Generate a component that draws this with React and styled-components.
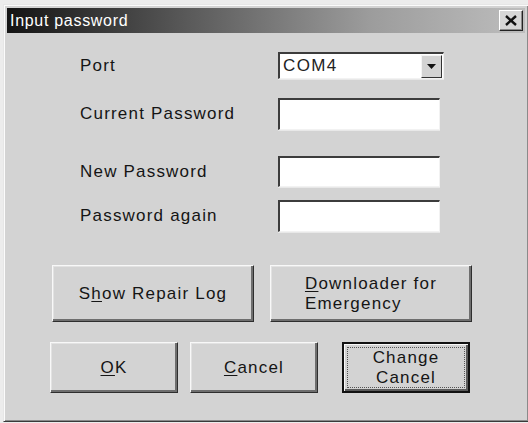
import React from "react";
import styled, { createGlobalStyle } from "styled-components";

const GlobalStyle = createGlobalStyle`
  html, body {
    margin: 0;
    padding: 0;
    background: #ececec;
    overflow: hidden;
  }
  body {
    font-family: "Liberation Sans", Arial, sans-serif;
  }
`;

const Window = styled.div`
  margin: 4px 0 0 3px;
  width: 526px;
  height: 418px;
  box-sizing: border-box;
  background: #d3d3d3;
  border: 1px solid;
  border-color: #e6e6e6 #3a3a3a #3a3a3a #e6e6e6;
  padding: 3px;
  box-shadow: inset 1px 1px 0 #fbfbfb, inset -1px -1px 0 #8a8a8a;
  display: flex;
  flex-direction: column;
`;

const TitleBar = styled.div`
  height: 25px;
  display: flex;
  align-items: center;
  justify-content: space-between;
  padding: 0 0 0 3px;
  background: linear-gradient(to right, #141414 0%, #5a5a5a 35%, #9c9c9c 70%, #bdbdbd 100%);
`;

const Title = styled.span`
  color: #fff;
  font-size: 16px;
  letter-spacing: 0.7px;
`;

const CloseButton = styled.div`
  width: 24px;
  height: 21px;
  box-sizing: border-box;
  margin-right: 2px;
  background: #d6d6d6;
  border: 1px solid;
  border-color: #fff #222 #222 #fff;
  box-shadow: inset -1px -1px 0 #8a8a8a;
  display: flex;
  align-items: center;
  justify-content: center;
`;

const Body = styled.div`
  flex: 1;
  display: flex;
  flex-direction: column;
`;

const Form = styled.div`
  display: grid;
  grid-template-columns: 198px auto;
  padding: 19px 0 0 73px;
  align-items: center;
`;

const Label = styled.div`
  font-size: 17px;
  letter-spacing: 1.2px;
  color: #151515;
  margin-top: ${(p) => p.$top || 0}px;
  height: ${(p) => p.$h}px;
  display: flex;
  align-items: center;
`;

const Field = styled.div`
  margin-top: ${(p) => p.$top || 0}px;
  width: ${(p) => p.$w || 162}px;
  height: ${(p) => p.$h}px;
  box-sizing: border-box;
  background: #fff;
  border-style: solid;
  border-width: 2px 1px 1px 2px;
  border-color: #3c3c3c #f2f2f2 #f2f2f2 #3c3c3c;
  box-shadow: 0 1px 0 #e8e8e8;
  display: flex;
  align-items: center;
`;

const SelectText = styled.span`
  flex: 1;
  padding-left: 3px;
  font-size: 17px;
  letter-spacing: 1.4px;
  color: #222;
`;

const ArrowButton = styled.div`
  width: 21px;
  height: 23px;
  box-sizing: border-box;
  margin-right: 1px;
  background: #d3d3d3;
  border: 1px solid;
  border-color: #f4f4f4 #333 #333 #f4f4f4;
  display: flex;
  align-items: center;
  justify-content: center;
`;

const ButtonRow = styled.div`
  display: flex;
  margin-top: ${(p) => p.$top}px;
  padding-left: ${(p) => p.$left}px;
`;

const Button = styled.div`
  width: ${(p) => p.$w}px;
  height: ${(p) => p.$h}px;
  margin-left: ${(p) => p.$ml || 0}px;
  box-sizing: border-box;
  background: #d3d3d3;
  border: 1px solid;
  border-color: #f8f8f8 #2e2e2e #2e2e2e #f8f8f8;
  box-shadow: inset -2px -2px 0 #6e6e6e, inset 1px 1px 0 #e2e2e2;
  display: flex;
  align-items: center;
  justify-content: center;
  font-size: 17px;
  letter-spacing: 1.2px;
  color: #151515;
  line-height: 20px;
  text-align: ${(p) => p.$align || "center"};
  ${(p) =>
    p.$default &&
    `
    border: 2px solid #111;
    box-shadow: inset 1px 1px 0 #f8f8f8, inset -2px -2px 0 #5a5a5a;
  `}
`;

const FocusRing = styled.div`
  width: calc(100% - 6px);
  height: calc(100% - 6px);
  box-sizing: border-box;
  border: 1px dotted #555;
  display: flex;
  align-items: center;
  justify-content: center;
`;

const Key = styled.span`
  text-decoration: underline;
  text-underline-offset: 2px;
`;

const fields = [
  { label: "Port", top: 0, h: 27, select: true },
  { label: "Current Password", top: 19, h: 32 },
  { label: "New Password", top: 26, h: 31 },
  { label: "Password again", top: 13, h: 32 },
];

export default function App() {
  return (
    <>
      <GlobalStyle />
      <Window>
        <TitleBar>
          <Title>Input password</Title>
          <CloseButton>
            <svg width="12" height="11" viewBox="0 0 12 11">
              <path d="M1 1 L11 10 M11 1 L1 10" stroke="#111" strokeWidth="2.4" />
            </svg>
          </CloseButton>
        </TitleBar>
        <Body>
          <Form>
            {fields.map((f) => (
              <React.Fragment key={f.label}>
                <Label $top={f.top} $h={f.h}>
                  {f.label}
                </Label>
                {f.select ? (
                  <Field $top={f.top} $h={f.h} $w={166}>
                    <SelectText>COM4</SelectText>
                    <ArrowButton>
                      <svg width="9" height="5" viewBox="0 0 9 5">
                        <path d="M0 0 L9 0 L4.5 5 Z" fill="#111" />
                      </svg>
                    </ArrowButton>
                  </Field>
                ) : (
                  <Field $top={f.top} $h={f.h} />
                )}
              </React.Fragment>
            ))}
          </Form>
          <ButtonRow $top={33} $left={45}>
            <Button $w={202} $h={57}>
              <span>
                S<Key>h</Key>ow Repair Log
              </span>
            </Button>
            <Button $w={202} $h={57} $ml={16} $align="left">
              <span>
                <Key>D</Key>ownloader for
                <br />
                Emergency
              </span>
            </Button>
          </ButtonRow>
          <ButtonRow $top={20} $left={43}>
            <Button $w={128} $h={51}>
              <span>
                <Key>O</Key>K
              </span>
            </Button>
            <Button $w={128} $h={51} $ml={12}>
              <span>
                <Key>C</Key>ancel
              </span>
            </Button>
            <Button $w={128} $h={51} $ml={24} $default>
              <FocusRing>
                <span>
                  Change
                  <br />
                  Cancel
                </span>
              </FocusRing>
            </Button>
          </ButtonRow>
        </Body>
      </Window>
    </>
  );
}
